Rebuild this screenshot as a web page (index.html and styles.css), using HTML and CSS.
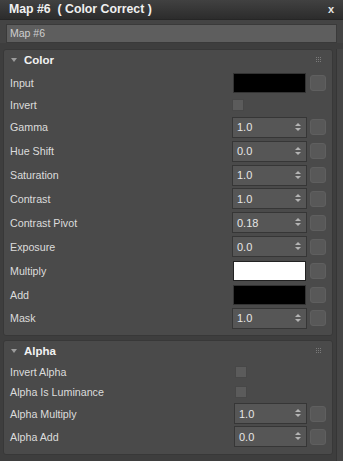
FILE: index.html
```html
<!DOCTYPE html>
<html lang="en">
<head>
  <meta charset="UTF-8">
  <title>Map #6 (Color Correct)</title>
  <link rel="stylesheet" href="styles.css">
</head>
<body>
  <div class="window">
    <div class="titlebar">
      <span class="title">Map #6&nbsp; ( Color Correct )</span>
      <span class="close">x</span>
    </div>
    <div class="name-bar">
      <div class="name-field">Map #6</div>
    </div>

    <div class="content">
      <div class="panels">
        <section class="panel">
          <div class="panel-head">
            <span class="caret"></span>
            <span class="panel-title">Color</span>
            <span class="grip"></span>
          </div>
          <div class="row first"><span class="label">Input</span><span class="ctl"><span class="swatch black"></span></span><span class="map-btn"></span></div>
          <div class="row check-row"><span class="label">Invert</span><span class="ctl"><span class="check"></span></span></div>
          <div class="row"><span class="label">Gamma</span><span class="ctl spinner">1.0<span class="arrows"></span></span><span class="map-btn"></span></div>
          <div class="row"><span class="label">Hue Shift</span><span class="ctl spinner">0.0<span class="arrows"></span></span><span class="map-btn"></span></div>
          <div class="row"><span class="label">Saturation</span><span class="ctl spinner">1.0<span class="arrows"></span></span><span class="map-btn"></span></div>
          <div class="row"><span class="label">Contrast</span><span class="ctl spinner">1.0<span class="arrows"></span></span><span class="map-btn"></span></div>
          <div class="row"><span class="label">Contrast Pivot</span><span class="ctl spinner">0.18<span class="arrows"></span></span><span class="map-btn"></span></div>
          <div class="row"><span class="label">Exposure</span><span class="ctl spinner">0.0<span class="arrows"></span></span><span class="map-btn"></span></div>
          <div class="row"><span class="label">Multiply</span><span class="ctl"><span class="swatch white"></span></span><span class="map-btn"></span></div>
          <div class="row"><span class="label">Add</span><span class="ctl"><span class="swatch black"></span></span><span class="map-btn"></span></div>
          <div class="row"><span class="label">Mask</span><span class="ctl spinner">1.0<span class="arrows"></span></span><span class="map-btn"></span></div>
        </section>

        <section class="panel alpha">
          <div class="panel-head">
            <span class="caret"></span>
            <span class="panel-title">Alpha</span>
            <span class="grip"></span>
          </div>
          <div class="row short"><span class="label">Invert Alpha</span><span class="ctl"><span class="check"></span></span></div>
          <div class="row short"><span class="label">Alpha Is Luminance</span><span class="ctl"><span class="check"></span></span></div>
          <div class="row small"><span class="label">Alpha Multiply</span><span class="ctl spinner">1.0<span class="arrows"></span></span><span class="map-btn"></span></div>
          <div class="row small"><span class="label">Alpha Add</span><span class="ctl spinner">0.0<span class="arrows"></span></span><span class="map-btn"></span></div>
        </section>
      </div>
      <div class="scrollbar"></div>
    </div>
  </div>
</body>
</html>
```

FILE: styles.css
```css
body {
  margin: 0;
  background-color: #3d3d3d;
  font-family: "Liberation Sans", Arial, sans-serif;
  font-size: 10.7px;
  color: #dcdcdc;
}
.window {
  width: 343px;
  height: 461px;
  overflow: hidden;
  display: flex;
  flex-direction: column;
  background-color: #444444;
}
.titlebar {
  height: 20px;
  box-sizing: border-box;
  display: flex;
  align-items: center;
  padding: 0 9px 1px 9px;
  background: linear-gradient(#414141, #2c2c2c);
  border-bottom: 1px solid #262626;
}
.title {
  flex: 1;
  font-size: 12.3px;
  font-weight: bold;
  color: #f0f0f0;
}
.close {
  font-size: 11px;
  font-weight: bold;
  color: #e8e8e8;
}
.name-bar {
  padding: 4px 6px 0 6px;
}
.name-field {
  height: 19px;
  box-sizing: border-box;
  background-color: #5e5e5e;
  border: 1px solid #3a3a3a;
  color: #cfcfcf;
  padding: 2px 0 0 3px;
  font-size: 10.5px;
}
.content {
  flex: 1;
  display: flex;
  padding-top: 6px;
  background-color: #3e3e3e;
}
.panels {
  width: 331px;
  margin-left: 3px;
}
.scrollbar {
  width: 6px;
  margin-left: 3px;
  background-color: #454545;
  border-left: 1px solid #363636;
}
.panel {
  background-color: #4a4a4a;
  border: 1px solid #383838;
  border-radius: 3px;
  padding-bottom: 5px;
}
.panel.alpha {
  margin-top: 4px;
  padding-bottom: 6px;
}
.panel-head {
  height: 21px;
  display: flex;
  align-items: center;
  padding: 0 6px 0 7px;
}
.caret {
  width: 0;
  height: 0;
  border-left: 3px solid transparent;
  border-right: 3px solid transparent;
  border-top: 4px solid #9c9c9c;
  margin-right: 7px;
  margin-top: -2px;
}
.panel-title {
  flex: 1;
  font-size: 11.5px;
  font-weight: bold;
  color: #f2f2f2;
  margin-top: -1px;
}
.grip {
  width: 1px;
  height: 1px;
  margin: -6px 9px 0 0;
  background-color: #7a7a7a;
  box-shadow: 2px 0 #7a7a7a, 4px 0 #7a7a7a,
    0 2px #7a7a7a, 2px 2px #7a7a7a, 4px 2px #7a7a7a,
    0 4px #7a7a7a, 2px 4px #7a7a7a, 4px 4px #7a7a7a;
}
.row {
  height: 23.9px;
  display: flex;
  align-items: center;
  padding-left: 6px;
}
.row.first {
  height: 23.7px;
}
.row.check-row {
  height: 20.7px;
}
.row.short {
  height: 20px;
}
.row.small {
  height: 23px;
}
.label {
  width: 222px;
}
.ctl {
  width: 75px;
  height: 21px;
  box-sizing: border-box;
  display: flex;
  align-items: center;
}
.alpha .ctl {
  margin-left: 2px;
  width: 73px;
}
.swatch {
  width: 73px;
  height: 20px;
  box-sizing: border-box;
  margin-left: 1px;
  border: 1px solid #333333;
}
.swatch.black {
  background-color: #000000;
}
.swatch.white {
  background-color: #ffffff;
  border-color: #222222;
}
.check {
  width: 12px;
  height: 12px;
  box-sizing: border-box;
  background-color: #5b5b5b;
  border: 1px solid #474747;
}
.alpha .check {
  margin-left: 1px;
}
.spinner {
  position: relative;
  background-color: #565656;
  border: 1px solid #363636;
  padding-left: 4px;
  color: #e6e6e6;
  font-size: 11px;
}
.arrows {
  position: absolute;
  right: 5px;
  top: 5px;
  width: 0;
  height: 0;
  border-left: 3px solid transparent;
  border-right: 3px solid transparent;
  border-bottom: 3px solid #b4b4b4;
}
.arrows::after {
  content: "";
  position: absolute;
  left: -3px;
  top: 5px;
  border-left: 3px solid transparent;
  border-right: 3px solid transparent;
  border-top: 3px solid #b4b4b4;
}
.map-btn {
  width: 16px;
  height: 16px;
  box-sizing: border-box;
  margin-left: 3px;
  background-color: #585858;
  border: 1px solid #5f5f5f;
  border-radius: 3px;
}
```
